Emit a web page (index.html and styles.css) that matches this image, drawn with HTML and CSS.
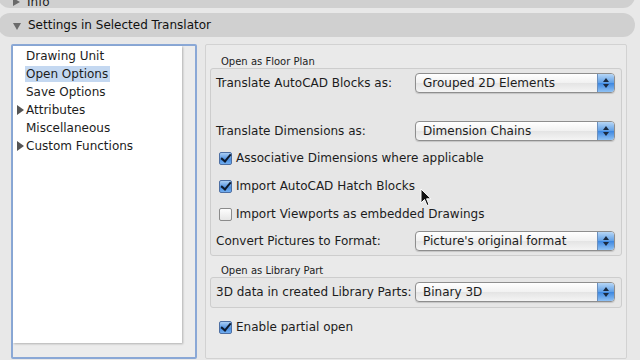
FILE: index.html
```html
<!DOCTYPE html>
<html lang="en">
<head>
    <meta charset="UTF-8">
    <title>Settings in Selected Translator</title>
    <link rel="stylesheet" href="styles.css">
</head>
<body>
    <div class="bar bar-info">
        <span class="tri tri-right"></span>
        <span>Info</span>
    </div>
    <div class="bar bar-settings">
        <span class="tri tri-down"></span>
        <span>Settings in Selected Translator</span>
    </div>

    <div class="main">
        <div class="list-box">
            <div class="list-top">
                <ul class="list">
                    <li>Drawing Unit</li>
                    <li><span class="selected">Open Options</span></li>
                    <li>Save Options</li>
                    <li><span class="tri tri-right small"></span>Attributes</li>
                    <li>Miscellaneous</li>
                    <li><span class="tri tri-right small"></span>Custom Functions</li>
                </ul>
                <div class="vtrack"></div>
            </div>
            <div class="htrack"></div>
        </div>

        <div class="panel">
            <div class="group-title">Open as Floor Plan</div>
            <div class="group floor">
                <div class="row r1">
                    <span class="label">Translate AutoCAD Blocks as:</span>
                    <div class="popup"><span>Grouped 2D Elements</span><span class="arrows"></span></div>
                </div>
                <div class="row r2">
                    <span class="label">Translate Dimensions as:</span>
                    <div class="popup"><span>Dimension Chains</span><span class="arrows"></span></div>
                </div>
                <div class="row check-row r3">
                    <span class="check on"></span>Associative Dimensions where applicable
                </div>
                <div class="row check-row r4">
                    <span class="check on"></span>Import AutoCAD Hatch Blocks
                </div>
                <div class="row check-row r4">
                    <span class="check"></span>Import Viewports as embedded Drawings
                </div>
                <div class="row r6">
                    <span class="label">Convert Pictures to Format:</span>
                    <div class="popup"><span>Picture's original format</span><span class="arrows"></span></div>
                </div>
            </div>

            <div class="group-title lib-title">Open as Library Part</div>
            <div class="group lib">
                <div class="row">
                    <span class="label">3D data in created Library Parts:</span>
                    <div class="popup"><span>Binary 3D</span><span class="arrows"></span></div>
                </div>
            </div>
            <div class="row check-row partial">
                <span class="check on"></span>Enable partial open
            </div>
        </div>
    </div>

    <svg class="cursor" width="12" height="19" viewBox="0 0 12 19">
        <path d="M1 1 L1 15 L4.5 11.5 L7 17.5 L9 16.6 L6.6 10.8 L11 10.8 Z" fill="#111" stroke="#fff" stroke-width="1"/>
    </svg>
</body>
</html>
```

FILE: styles.css
```css
* {
    margin: 0;
    padding: 0;
    box-sizing: border-box;
}

body {
    background: #e8e8e8;
    color: #1c1c1c;
    font-family: "DejaVu Sans", Verdana, sans-serif;
    font-size: 12px;
    width: 640px;
    height: 360px;
    overflow: hidden;
    position: relative;
}

/* disclosure bars */
.bar {
    display: flex;
    align-items: center;
    gap: 7px;
    width: 637px;
    margin-left: -2px;
    padding-left: 15px;
    background: #d0d0d0;
    border-radius: 12px;
    font-size: 12px;
}

.bar-info {
    height: 24px;
    margin-top: -16px;
    padding-top: 12px;
}

.bar-settings {
    height: 24px;
    margin-top: 5px;
    color: #111;
}

.tri {
    display: inline-block;
    width: 0;
    height: 0;
}

.tri-right {
    border-top: 4px solid transparent;
    border-bottom: 4px solid transparent;
    border-left: 7px solid #6a6a6a;
}

.tri-down {
    border-left: 4px solid transparent;
    border-right: 4px solid transparent;
    border-top: 7px solid #6a6a6a;
    margin-top: 2px;
}

.tri.small {
    border-top-width: 5px;
    border-bottom-width: 5px;
    border-left-width: 7px;
    border-left-color: #555;
    position: absolute;
    left: -9px;
    top: 4px;
}

.main {
    display: flex;
    gap: 8px;
    padding: 7px 0 0 11px;
}

/* list on the left */
.list-box {
    width: 186px;
    height: 315px;
    border: 2px solid #8aa8d6;
    border-radius: 2px;
    display: flex;
    flex-direction: column;
    background: #ececec;
}

.list-top {
    flex: 1;
    display: flex;
}

.list {
    flex: 1;
    list-style: none;
    background: #fff;
    box-shadow: 1px 1px 2px rgba(0, 0, 0, 0.25);
    padding: 1px 0 0 13px;
}

.list li {
    position: relative;
    height: 18px;
    line-height: 18px;
}

.selected {
    background: #c4d8f1;
    padding: 1px 2px 1px 1px;
    margin-left: -1px;
}

.vtrack {
    width: 13px;
}

.htrack {
    height: 14px;
}

/* right panel */
.panel {
    width: 422px;
    height: 315px;
    border: 1px solid #d2d2d2;
    border-radius: 2px;
    background: #eaeaea;
    padding: 0 4px;
}

.group-title {
    font-size: 10px;
    padding: 11px 0 0 11px;
    height: 23px;
    color: #222;
}

.lib-title {
    padding-top: 9px;
    height: 21px;
}

.group {
    border: 1px solid #cdcdcd;
    border-radius: 3px;
    background: #e6e6e6;
    padding: 4px 5px;
}

.floor {
    height: 188px;
}

.lib {
    height: 31px;
    padding-top: 4px;
}

.row {
    display: flex;
    align-items: center;
    height: 20px;
}

.label {
    flex: 1;
}

.r2 {
    margin-top: 28px;
}

.r3 {
    margin-top: 7px;
}

.r4 {
    margin-top: 8px;
}

.r6 {
    margin-top: 7px;
}

.check-row {
    padding-left: 3px;
}

.partial {
    margin-top: 9px;
    padding-left: 9px;
}

.check {
    width: 13px;
    height: 13px;
    margin-right: 4px;
    border: 1px solid #8b8b8b;
    border-radius: 2px;
    background: linear-gradient(#fdfdfd, #e6e6e6);
    position: relative;
}

.check.on {
    border-color: #4d6fa3;
    background: linear-gradient(#a9cdf3, #4b8ee0 60%, #72aef0);
}

.check.on::after {
    content: "";
    position: absolute;
    left: 3px;
    top: -1px;
    width: 4px;
    height: 8px;
    border: solid #0e1a2c;
    border-width: 0 2px 2px 0;
    transform: rotate(40deg);
}

/* popup buttons */
.popup {
    width: 200px;
    height: 20px;
    margin-right: 1px;
    display: flex;
    align-items: center;
    justify-content: space-between;
    border: 1px solid #8e8e8e;
    border-radius: 4px;
    background: linear-gradient(#ffffff, #f1f1f1 50%, #e4e4e4 51%, #f4f4f4);
    box-shadow: 0 1px 1px rgba(0, 0, 0, 0.15);
    padding-left: 7px;
    overflow: hidden;
}

.arrows {
    width: 17px;
    height: 18px;
    background: linear-gradient(#b6d6f6, #5f9fe6 50%, #3d87e0 51%, #8fc1f4);
    border-left: 1px solid #6b8fbd;
    position: relative;
}

.arrows::before,
.arrows::after {
    content: "";
    position: absolute;
    left: 5px;
    border-left: 3px solid transparent;
    border-right: 3px solid transparent;
}

.arrows::before {
    top: 4px;
    border-bottom: 4px solid #1b2a40;
}

.arrows::after {
    top: 10px;
    border-top: 4px solid #1b2a40;
}

.cursor {
    position: absolute;
    left: 420px;
    top: 188px;
}
```
